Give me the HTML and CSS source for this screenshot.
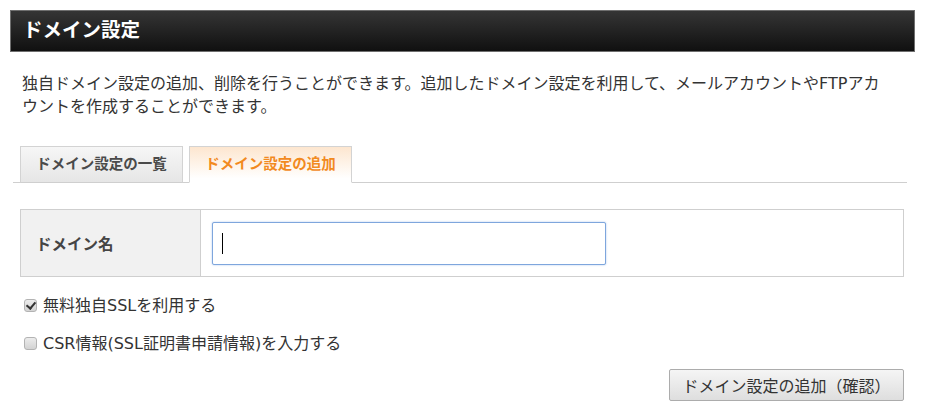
FILE: index.html
```html
<!DOCTYPE html>
<html lang="ja">
    <head>
        <meta charset="UTF-8">
        <title>ドメイン設定</title>
        <link rel="stylesheet" href="styles.css">
    </head>
    <body>
        <div class="page">
            <h1 class="page-title">ドメイン設定</h1>
            <p class="lead">独自ドメイン設定の追加、削除を行うことができます。追加したドメイン設定を利用して、メールアカウントやFTPアカ<br>ウントを作成することができます。</p>

            <ul class="tabs">
                <li class="tab">ドメイン設定の一覧</li>
                <li class="tab is-active">ドメイン設定の追加</li>
            </ul>

            <form class="domain-form">
                <table class="form-table">
                    <tr>
                        <th>ドメイン名</th>
                        <td><span class="field is-focused"><input type="text" class="text-input"></span></td>
                    </tr>
                </table>

                <label class="check"><input type="checkbox" checked>無料独自SSLを利用する</label>
                <label class="check"><input type="checkbox">CSR情報(SSL証明書申請情報)を入力する</label>

                <div class="actions">
                    <button type="button" class="btn">ドメイン設定の追加（確認）</button>
                </div>
            </form>
        </div>
    </body>
</html>
```

FILE: styles.css
```css
html,
body {
  margin: 0;
  padding: 0;
  background: #fff;
}
body {
  font-family: "DejaVu Sans", "Noto Sans CJK JP", sans-serif;
  font-size: 16px;
  color: #333;
}
.page {
  width: 905px;
  margin: 10px 0 0 10px;
}

/* header bar */
.page-title {
  margin: 0;
  height: 40px;
  line-height: 40px;
  padding: 0 12px;
  border: 1px solid #6f6f6f;
  background: linear-gradient(#353535, #101010);
  color: #fff;
  font-size: 19.5px;
  font-weight: bold;
}

.lead {
  margin: 20px 0 0;
  padding: 0 0 0 12px;
  line-height: 23px;
  white-space: nowrap;
}

/* tabs */
.tabs {
  display: flex;
  gap: 6px;
  list-style: none;
  margin: 28px 0 0 3px;
  padding: 0 0 0 7px;
  width: 887px;
  border-bottom: 1px solid #cfcfcf;
}
.tab {
  width: 161px;
  height: 35px;
  line-height: 35px;
  margin-bottom: -1px;
  border: 1px solid #d3d3d3;
  border-bottom-color: #cfcfcf;
  background: linear-gradient(#f6f6f6, #e6e6e6);
  text-align: center;
  font-size: 14.5px;
  font-weight: bold;
  color: #4a4a4a;
}
.tab.is-active {
  background: linear-gradient(#fde6cf, #fff 90%);
  border-bottom-color: #fff;
  color: #f28a1f;
}

/* form */
.domain-form {
  margin: 26px 0 0 10px;
  width: 884px;
}
.form-table {
  width: 100%;
  border-collapse: collapse;
  border: 1px solid #cfcfcf;
}
.form-table th {
  width: 164px;
  padding: 0 0 0 15px;
  background: #f1f1f1;
  border-right: 1px solid #cfcfcf;
  text-align: left;
  font-size: 15.5px;
  font-weight: bold;
  color: #444;
}
.form-table td {
  padding: 12px 11px 11px;
}
.field {
  position: relative;
  display: block;
  width: 394px;
}
.field.is-focused::after {
  content: "";
  position: absolute;
  left: 10px;
  top: 11px;
  width: 1px;
  height: 21px;
  background: #000;
}
.text-input {
  display: block;
  box-sizing: border-box;
  width: 394px;
  height: 43px;
  margin: 0;
  padding: 0 9px;
  border: 1px solid #a8a8a8;
  border-radius: 2px;
  font: inherit;
  outline: none;
}
.is-focused .text-input {
  border-color: #7ea6dd;
  box-shadow: 0 0 2px rgba(110, 155, 220, .6);
}

/* checkboxes */
.check {
  display: flex;
  align-items: center;
  gap: 6px;
  margin-top: 17px;
  padding-left: 4px;
  line-height: 24px;
}
.check + .check {
  margin-top: 14px;
}
.check input {
  -webkit-appearance: none;
  appearance: none;
  position: relative;
  box-sizing: border-box;
  width: 13px;
  height: 13px;
  margin: 0 0 2px;
  border: 1px solid #b3b3b3;
  border-radius: 3px;
  background: linear-gradient(#ececec, #d3d3d3);
}
.check input:checked::after {
  content: "";
  position: absolute;
  left: 3px;
  top: 0px;
  width: 4px;
  height: 7px;
  border: solid #333;
  border-width: 0 2px 2px 0;
  transform: rotate(40deg);
}

/* submit */
.actions {
  display: flex;
  justify-content: flex-end;
  margin-top: 13px;
}
.btn {
  height: 32px;
  width: 235px;
  padding: 0;
  border: 1px solid #acacac;
  border-radius: 2px;
  background: linear-gradient(#f5f5f5, #dedede);
  font: inherit;
  color: #333;
}
```
